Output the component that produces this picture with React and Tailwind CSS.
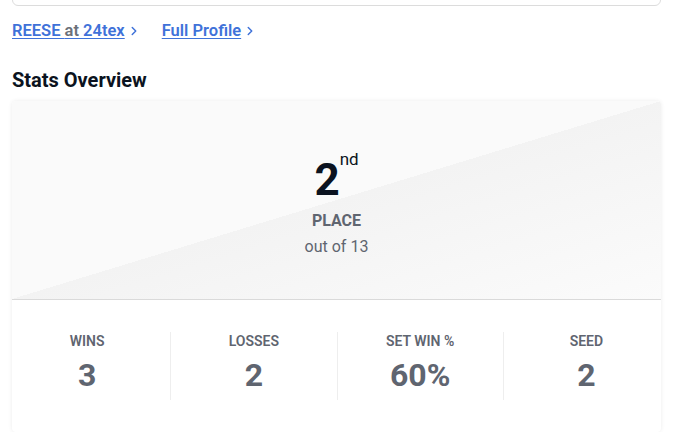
import {ChevronRight} from 'lucide-react';

const STATS = [
  {label: 'Wins', value: '3'},
  {label: 'Losses', value: '2'},
  {label: 'Set Win %', value: '60%'},
  {label: 'Seed', value: '2'},
];

export default function App() {
  return (
    <div className="min-h-[433px] bg-white pl-3 pr-4 font-['Roboto',sans-serif]">
      {/* tail of the card above */}
      <div className="-mt-2 h-[14px] rounded-b-md border border-[#dcdcdc]" />

      <div className="mt-[15px] flex items-center gap-[21px] text-[16.5px] font-semibold leading-5">
        <a href="#" className="flex items-center gap-[2px] text-[#3f72d9]">
          <span className="underline underline-offset-2">
            REESE <span className="text-[#6b7079]">at</span> 24tex
          </span>
          <ChevronRight className="h-[14px] w-[14px]" strokeWidth={2.5} />
        </a>
        <a href="#" className="flex items-center gap-[2px] text-[#3f72d9]">
          <span className="underline underline-offset-2">Full Profile</span>
          <ChevronRight className="h-[14px] w-[14px]" strokeWidth={2.5} />
        </a>
      </div>

      <h2 className="mt-[27px] text-[20px] font-bold leading-6 text-[#0b1320]">Stats Overview</h2>

      <div className="mt-[9px] overflow-hidden rounded-sm bg-white shadow-[0_0_4px_rgba(0,0,0,0.08)]">
        <div className="flex h-[199px] flex-col items-center border-b border-[#dadada] bg-[linear-gradient(to_bottom_right,#fafafa_50%,#f3f3f3_50%,#fbfbfb_100%)] pt-[51px]">
          <div className="flex items-start text-[#0b1320]">
            <span className="text-[44px] font-bold leading-[56px]">2</span>
            <span className="mt-[-5px] text-[17px] leading-6">nd</span>
          </div>
          <div className="mt-[3px] text-[16px] font-bold uppercase leading-5 text-[#5f6570]">Place</div>
          <div className="mt-[6px] text-[16px] leading-5 text-[#5f6570]">out of 13</div>
        </div>

        <div className="-mx-2 grid h-[132px] grid-cols-4 items-center">
          {STATS.map((s, i) => (
            <div
              key={s.label}
              className={`flex h-[68px] flex-col items-center ${i > 0 ? 'border-l border-[#eeeeee]' : ''}`}
            >
              <div className="mt-[1px] text-[14px] font-semibold uppercase leading-4 text-[#5f6570]">{s.label}</div>
              <div className="mt-[8px] text-[32px] font-bold leading-9 text-[#5f6570]">{s.value}</div>
            </div>
          ))}
        </div>
      </div>
    </div>
  );
}
